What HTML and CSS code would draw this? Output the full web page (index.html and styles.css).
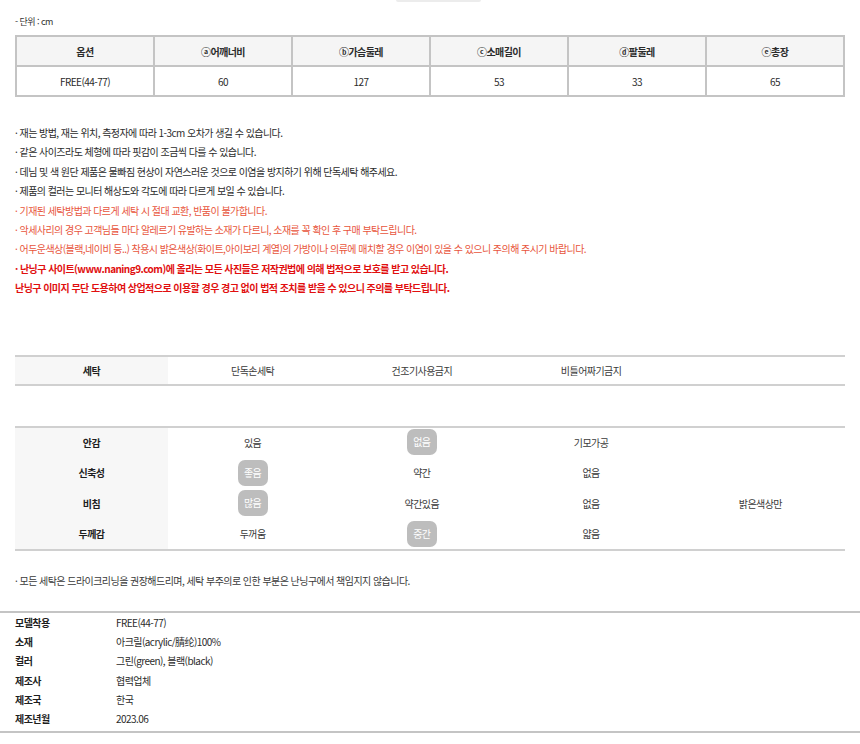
FILE: index.html
```html
<!DOCTYPE html>
<html lang="ko">
<head>
<meta charset="utf-8">
<link rel="stylesheet" href="styles.css">
</head>
<body>
<div class="top-img"></div>
<div class="wrap">
  <p class="unit">- 단위 : cm</p>
  <table class="size">
    <tr><th>옵션</th><th>ⓐ어깨너비</th><th>ⓑ가슴둘레</th><th>ⓒ소매길이</th><th>ⓓ팔둘레</th><th>ⓔ총장</th></tr>
    <tr><td>FREE(44-77)</td><td>60</td><td>127</td><td>53</td><td>33</td><td>65</td></tr>
  </table>

  <ul class="notes">
    <li>· 재는 방법, 재는 위치, 측정자에 따라 1-3cm 오차가 생길 수 있습니다.</li>
    <li>· 같은 사이즈라도 체형에 따라 핏감이 조금씩 다를 수 있습니다.</li>
    <li>· 데님 및 색 원단 제품은 물빠짐 현상이 자연스러운 것으로 이염을 방지하기 위해 단독세탁 해주세요.</li>
    <li>· 제품의 컬러는 모니터 해상도와 각도에 따라 다르게 보일 수 있습니다.</li>
    <li class="warn">· 기재된 세탁방법과 다르게 세탁 시 절대 교환, 반품이 불가합니다.</li>
    <li class="warn">· 악세사리의 경우 고객님들 마다 알레르기 유발하는 소재가 다르니, 소재를 꼭 확인 후 구매 부탁드립니다.</li>
    <li class="warn">· 어두운색상(블랙,네이비 등..) 착용시 밝은색상(화이트,아이보리 계열)의 가방이나 의류에 매치할 경우 이염이 있을 수 있으니 주의해 주시기 바랍니다.</li>
    <li class="strong">· 난닝구 사이트(www.naning9.com)에 올리는 모든 사진들은 저작권법에 의해 법적으로 보호를 받고 있습니다.</li>
    <li class="strong">난닝구 이미지 무단 도용하여 상업적으로 이용할 경우 경고 없이 법적 조치를 받을 수 있으니 주의를 부탁드립니다.</li>
  </ul>

  <table class="grid wash">
    <tr><th>세탁</th><td>단독손세탁</td><td>건조기사용금지</td><td>비틀어짜기금지</td><td></td></tr>
  </table>

  <table class="grid fabric">
    <tr><th>안감</th><td>있음</td><td><span class="badge">없음</span></td><td>기모가공</td><td></td></tr>
    <tr><th>신축성</th><td><span class="badge">좋음</span></td><td>약간</td><td>없음</td><td></td></tr>
    <tr><th>비침</th><td><span class="badge">많음</span></td><td>약간있음</td><td>없음</td><td>밝은색상만</td></tr>
    <tr><th>두께감</th><td>두꺼움</td><td><span class="badge">중간</span></td><td>얇음</td><td></td></tr>
  </table>

  <p class="care">· 모든 세탁은 드라이크리닝을 권장해드리며, 세탁 부주의로 인한 부분은 난닝구에서 책임지지 않습니다.</p>
</div>

<div class="info">
  <dl>
    <div class="row"><dt>모델착용</dt><dd>FREE(44-77)</dd></div>
    <div class="row"><dt>소재</dt><dd>아크릴(acrylic/腈纶)100%</dd></div>
    <div class="row"><dt>컬러</dt><dd>그린(green), 블랙(black)</dd></div>
    <div class="row"><dt>제조사</dt><dd>협력업체</dd></div>
    <div class="row"><dt>제조국</dt><dd>한국</dd></div>
    <div class="row"><dt>제조년월</dt><dd>2023.06</dd></div>
  </dl>
</div>
</body>
</html>
```

FILE: styles.css
```css
* { box-sizing: border-box; }
html, body { margin: 0; padding: 0; background: #fff; }
body {
  font-family: "Noto Sans CJK KR", "Noto Sans", sans-serif;
  font-size: 10px;
  letter-spacing: -0.55px;
  color: #2b2b2b;
}
.top-img {
  width: 85px;
  height: 2px;
  margin-left: 396px;
  background: #ececec;
  border-radius: 0 0 40px 40px;
}
.wrap { padding: 0 15px; }
.unit {
  margin: 13px 0 0;
  line-height: 14px;
  font-size: 9px;
  color: #333;
}
table { border-collapse: collapse; width: 100%; table-layout: fixed; }
.size { margin-top: 6px; border: 2px solid #c4c4c4; }
.size th, .size td {
  border: 2px solid #c4c4c4;
  text-align: center;
  height: 30px;
  padding: 0;
  color: #2b2b2b;
}
.size th { background: #f5f5f5; font-weight: bold; }
.notes {
  list-style: none;
  margin: 26px 0 0;
  padding: 0;
}
.notes li { line-height: 19.4px; height: 19.4px; white-space: nowrap; }
.notes .warn { color: #e8553c; }
.notes .strong { color: #e10f0f; font-weight: bold; }

.grid { border-top: 2px solid #d0d0d0; border-bottom: 2px solid #d0d0d0; }
.grid th {
  width: 153px;
  background: #f7f7f7;
  font-weight: bold;
  color: #1e1e1e;
  padding: 0;
}
.grid td { text-align: center; padding: 0; color: #3a3a3a; }
.wash { margin-top: 57px; }
.wash th, .wash td { height: 29px; }
.fabric { margin-top: 40px; }
.fabric th, .fabric td { height: 30.75px; }
.badge {
  display: inline-block;
  width: 30px;
  height: 26px;
  line-height: 26px;
  border-radius: 7px;
  background: #bdbdbd;
  color: #fff;
  text-align: center;
  vertical-align: middle;
}
.care { margin: 23px 0 0; line-height: 14px; color: #3a3a3a; }
.info {
  margin-top: 23px;
  border-top: 2px solid #c4c4c4;
  border-bottom: 2px solid #c4c4c4;
  padding: 0 15px 3px;
}
.info dl { margin: 0; }
.info .row { display: flex; height: 19.3px; align-items: center; }
.info dt { width: 101px; font-weight: bold; color: #1e1e1e; }
.info dd { margin: 0; color: #2b2b2b; }
```
